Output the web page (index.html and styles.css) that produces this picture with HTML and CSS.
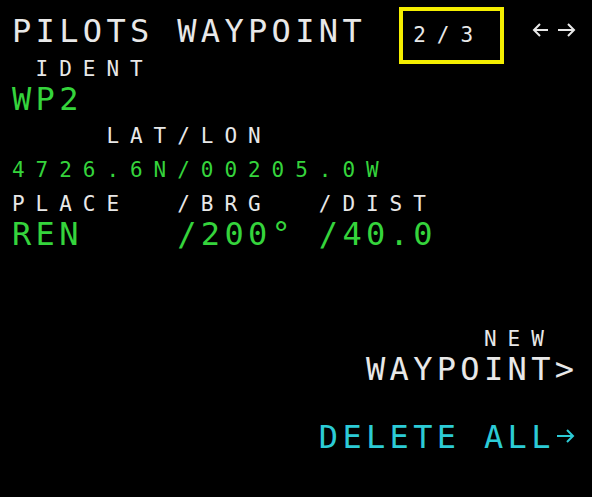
FILE: index.html
```html
<!DOCTYPE html>
<html lang="en">
<head>
  <meta charset="UTF-8">
  <title>Pilots Waypoint - MCDU</title>
  <link rel="stylesheet" href="styles.css">
</head>
<body>

  <div class="mcdu">
    <div class="line lg white">PILOTS WAYPOINT  <span class="sm">2/3  </span><svg class="arrows" width="47" height="14" viewBox="0 0 47 14"><path d="M3 7H17M9 1L3 7L9 13"/><path d="M27 7H43M37 1L43 7L37 13"/></svg></div>
    <div class="line sm white"> IDENT</div>
    <div class="line lg green">WP2</div>
    <div class="line sm white">    LAT/LON</div>
    <div class="line sm green">4726.6N/00205.0W</div>
    <div class="line sm white">PLACE  /BRG  /DIST</div>
    <div class="line lg green">REN    /200° /40.0</div>
    <div class="line sm"></div>
    <div class="line lg"></div>
    <div class="line sm white">                    NEW</div>
    <div class="line lg white">               WAYPOINT&gt;</div>
    <div class="line sm"></div>
    <div class="line lg cyan">             DELETE ALL<svg class="arrows" width="23" height="14" viewBox="0 0 23 14"><path d="M2 7H18M12 1L18 7L12 13"/></svg></div>

    <div class="page-mark"></div>
  </div>

</body>
</html>
```

FILE: styles.css
```css
* {
  margin: 0; padding: 0; box-sizing: border-box;
}

body {
  background: #000;
  font-family: 'DejaVu Sans Mono', monospace;
  color: #e8e8e8;
}

.mcdu {
  position: relative;
  width: 592px;
  height: 497px;
  padding: 15px 0 0 12px;
  overflow: hidden;
}

/* every line sits on the same 24 column grid */
.line {
  height: 33.83px;
  line-height: 33.83px;
  white-space: pre;
}

.lg {
  font-size: 32px;
  letter-spacing: calc(23.6px - 0.6021em);
}

.sm {
  font-size: 21px;
  letter-spacing: calc(23.6px - 0.6021em);
}

.line.sm {
  padding-top: 3.8px;
}

.white { color: #e8e8e8; }
.green { color: #35d43c; }
.cyan  { color: #2ccbd6; }

.arrows {
  vertical-align: 5px;
  fill: none;
  stroke: currentColor;
  stroke-width: 2;
}

/* yellow highlight over the page counter */
.page-mark {
  position: absolute;
  left: 399px;
  top: 7px;
  width: 105px;
  height: 57px;
  border: 4px solid #f4ee00;
}
```
